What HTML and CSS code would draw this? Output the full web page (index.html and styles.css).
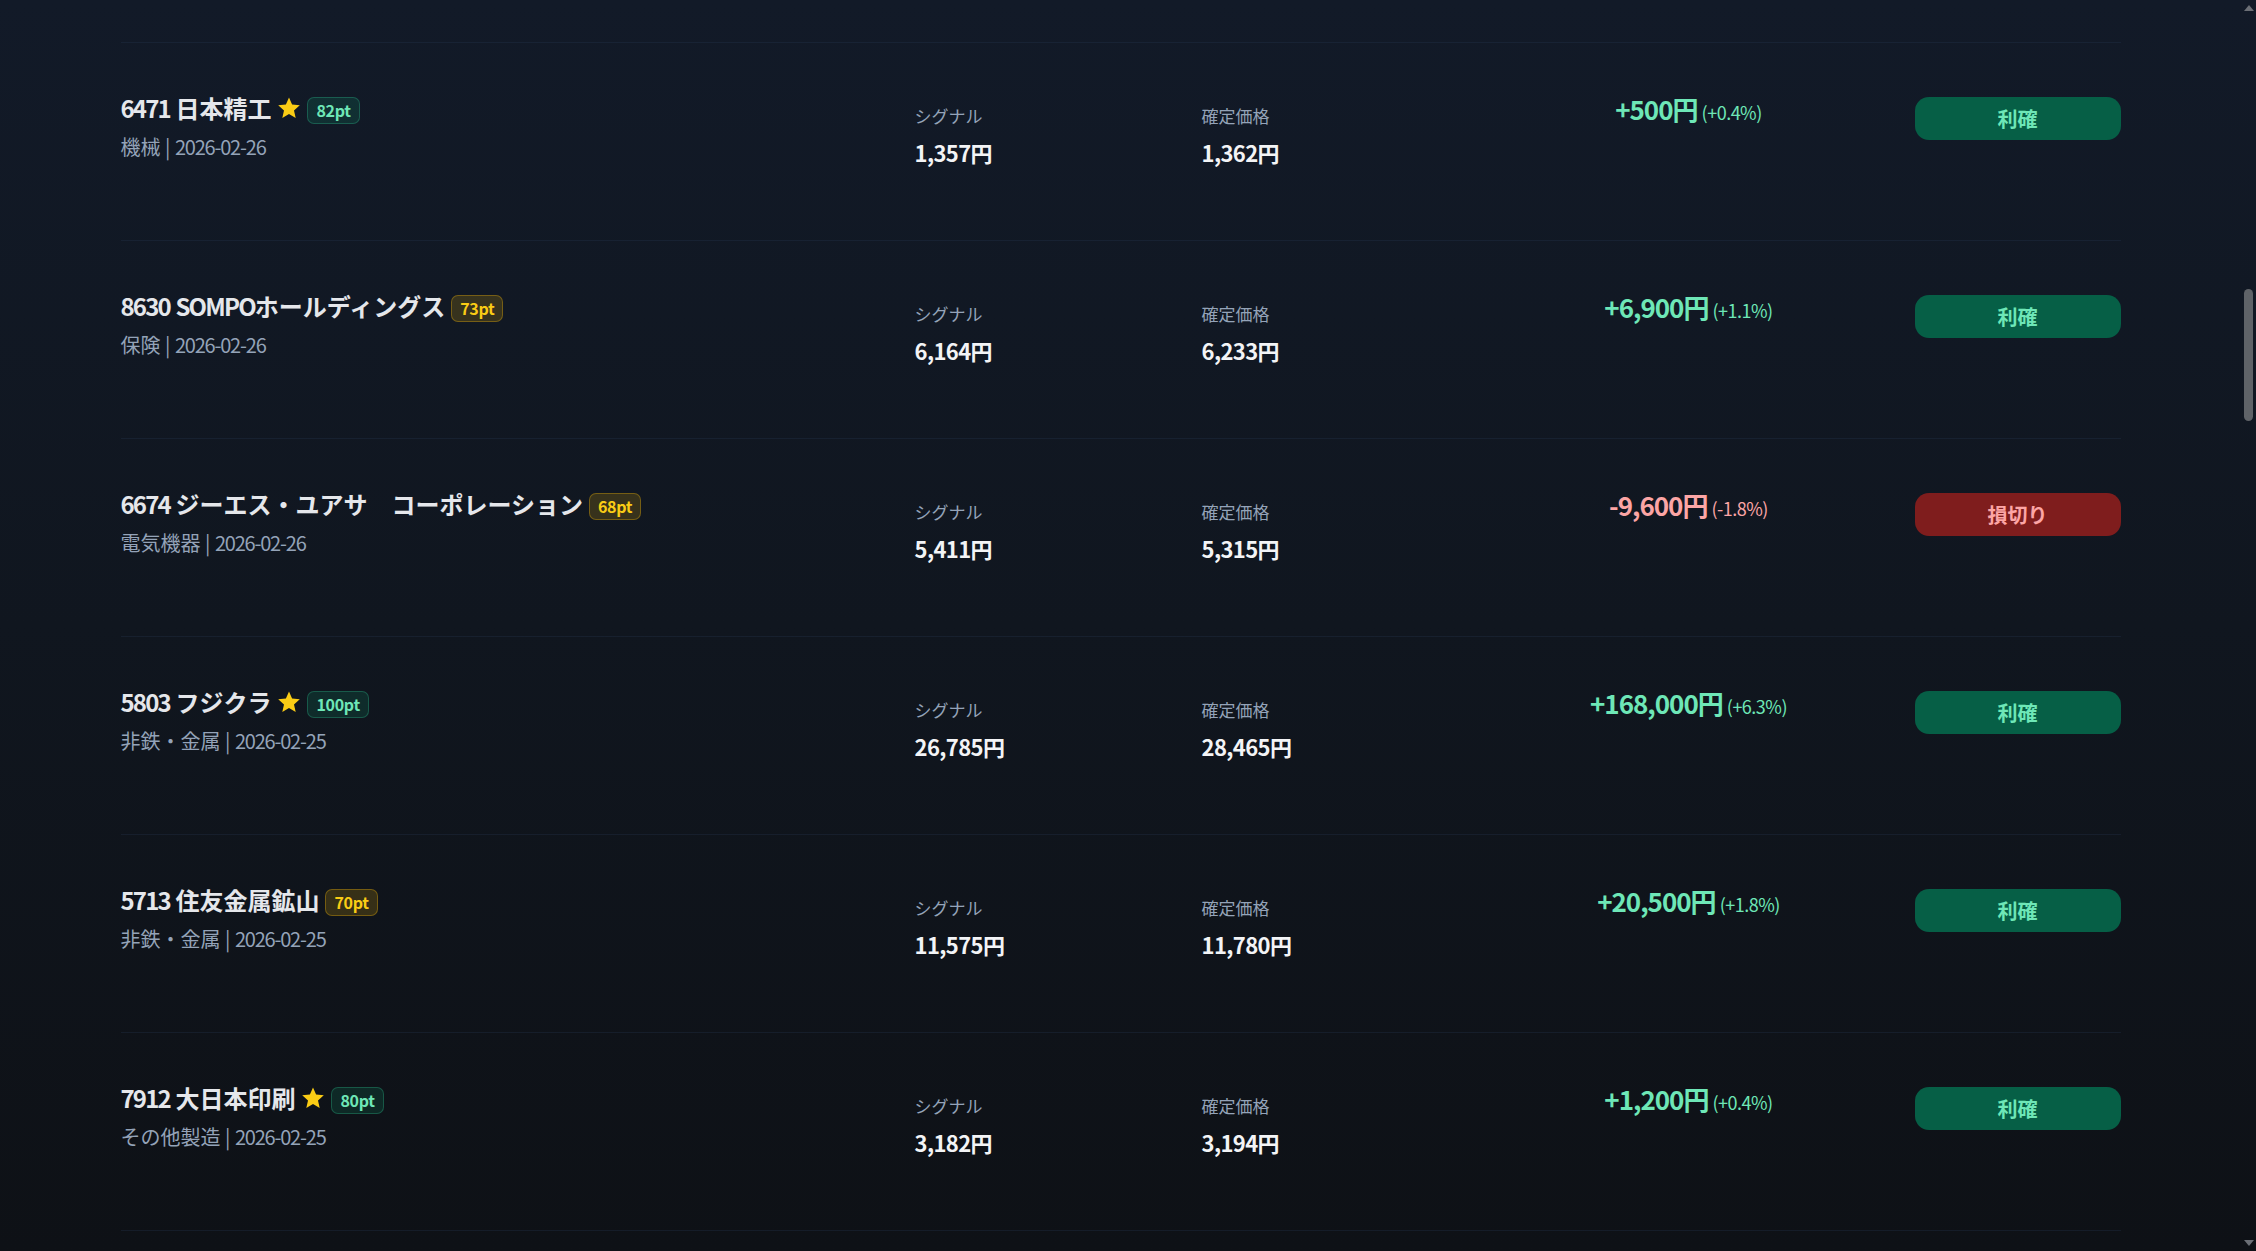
FILE: index.html
```html
<!DOCTYPE html>
<html lang="ja">
<head>
<meta charset="utf-8">
<title>シグナル履歴</title>
<link rel="stylesheet" href="styles.css">
</head>
<body>
<div class="app">
  <main class="viewport">
    <div class="list">
      <div class="row">
        <div class="stock">
          <div class="title"><span class="name"><span class="lat">6471</span> 日本精工</span><svg class="star" viewBox="0 0 24 24"><path d="M12 1.5l3.1 7.1 7.7.7-5.8 5.1 1.7 7.6L12 18l-6.7 4 1.7-7.6-5.8-5.1 7.7-.7z"/></svg><span class="badge badge-green">82pt</span></div>
          <div class="meta">機械 | <span class="date">2026-02-26</span></div>
        </div>
        <div class="price"><div class="label">シグナル</div><div class="value">1,357円</div></div>
        <div class="price"><div class="label">確定価格</div><div class="value">1,362円</div></div>
        <div class="pnl pos"><span class="amount">+500円</span><span class="pct">(+0.4%)</span></div>
        <div class="action"><span class="btn btn-win">利確</span></div>
      </div>

      <div class="row">
        <div class="stock">
          <div class="title"><span class="name"><span class="lat">8630</span> <span class="lat">SOMPO</span>ホールディングス</span><span class="badge badge-yellow">73pt</span></div>
          <div class="meta">保険 | <span class="date">2026-02-26</span></div>
        </div>
        <div class="price"><div class="label">シグナル</div><div class="value">6,164円</div></div>
        <div class="price"><div class="label">確定価格</div><div class="value">6,233円</div></div>
        <div class="pnl pos"><span class="amount">+6,900円</span><span class="pct">(+1.1%)</span></div>
        <div class="action"><span class="btn btn-win">利確</span></div>
      </div>

      <div class="row">
        <div class="stock">
          <div class="title"><span class="name"><span class="lat">6674</span> ジーエス・ユアサ　コーポレーション</span><span class="badge badge-yellow">68pt</span></div>
          <div class="meta">電気機器 | <span class="date">2026-02-26</span></div>
        </div>
        <div class="price"><div class="label">シグナル</div><div class="value">5,411円</div></div>
        <div class="price"><div class="label">確定価格</div><div class="value">5,315円</div></div>
        <div class="pnl neg"><span class="amount">-9,600円</span><span class="pct">(-1.8%)</span></div>
        <div class="action"><span class="btn btn-loss">損切り</span></div>
      </div>

      <div class="row">
        <div class="stock">
          <div class="title"><span class="name"><span class="lat">5803</span> フジクラ</span><svg class="star" viewBox="0 0 24 24"><path d="M12 1.5l3.1 7.1 7.7.7-5.8 5.1 1.7 7.6L12 18l-6.7 4 1.7-7.6-5.8-5.1 7.7-.7z"/></svg><span class="badge badge-green">100pt</span></div>
          <div class="meta">非鉄・金属 | <span class="date">2026-02-25</span></div>
        </div>
        <div class="price"><div class="label">シグナル</div><div class="value">26,785円</div></div>
        <div class="price"><div class="label">確定価格</div><div class="value">28,465円</div></div>
        <div class="pnl pos"><span class="amount">+168,000円</span><span class="pct">(+6.3%)</span></div>
        <div class="action"><span class="btn btn-win">利確</span></div>
      </div>

      <div class="row">
        <div class="stock">
          <div class="title"><span class="name"><span class="lat">5713</span> 住友金属鉱山</span><span class="badge badge-yellow">70pt</span></div>
          <div class="meta">非鉄・金属 | <span class="date">2026-02-25</span></div>
        </div>
        <div class="price"><div class="label">シグナル</div><div class="value">11,575円</div></div>
        <div class="price"><div class="label">確定価格</div><div class="value">11,780円</div></div>
        <div class="pnl pos"><span class="amount">+20,500円</span><span class="pct">(+1.8%)</span></div>
        <div class="action"><span class="btn btn-win">利確</span></div>
      </div>

      <div class="row">
        <div class="stock">
          <div class="title"><span class="name"><span class="lat">7912</span> 大日本印刷</span><svg class="star" viewBox="0 0 24 24"><path d="M12 1.5l3.1 7.1 7.7.7-5.8 5.1 1.7 7.6L12 18l-6.7 4 1.7-7.6-5.8-5.1 7.7-.7z"/></svg><span class="badge badge-green">80pt</span></div>
          <div class="meta">その他製造 | <span class="date">2026-02-25</span></div>
        </div>
        <div class="price"><div class="label">シグナル</div><div class="value">3,182円</div></div>
        <div class="price"><div class="label">確定価格</div><div class="value">3,194円</div></div>
        <div class="pnl pos"><span class="amount">+1,200円</span><span class="pct">(+0.4%)</span></div>
        <div class="action"><span class="btn btn-win">利確</span></div>
      </div>
    </div>
  </main>
  <div class="scrollbar">
    <span class="sb-up"></span>
    <span class="sb-thumb"></span>
    <span class="sb-down"></span>
  </div>
</div>
</body>
</html>
```

FILE: styles.css
```css
html, body {
  margin: 0;
  height: 100%;
}

body {
  background: linear-gradient(180deg, #121a28 0%, #10161f 50%, #0e1116 100%);
  font-family: "Noto Sans CJK JP", "Noto Sans", sans-serif;
  color: #e5e7eb;
  overflow: hidden;
}

.app {
  display: flex;
  height: 100vh;
}

.viewport {
  flex: 1;
  overflow: hidden;
}

.list {
  width: 2000px;
  margin: 42px auto 0;
}

.row {
  display: grid;
  grid-template-columns: 794px 287px 287px 400px 1fr;
  align-items: start;
  padding: 47px 0 73px;
  border-top: 1px solid rgba(40, 56, 84, 0.3);
}

.row:last-child {
  border-bottom: 1px solid rgba(40, 56, 84, 0.3);
}

.title {
  display: flex;
  align-items: center;
  height: 36px;
}

.name {
  font-size: 24px;
  line-height: 36px;
  font-weight: 700;
  color: #e5e7eb;
  white-space: nowrap;
}

.lat {
  letter-spacing: -1.8px;
}

.star {
  width: 24px;
  height: 24px;
  margin-left: 6px;
  fill: #facc15;
  flex: none;
}

.badge {
  margin-left: 6px;
  margin-top: 5px;
  height: 27px;
  box-sizing: border-box;
  padding: 0 8px;
  border-radius: 7px;
  font-size: 16px;
  font-weight: 700;
  line-height: 25px;
  letter-spacing: -0.3px;
  border: 1px solid transparent;
}

.badge-green {
  color: #6ee7b7;
  background: rgba(16, 185, 129, 0.14);
  border-color: rgba(52, 211, 153, 0.28);
}

.badge-yellow {
  color: #facc15;
  background: rgba(234, 179, 8, 0.18);
  border-color: rgba(234, 179, 8, 0.35);
}

.meta {
  margin-top: 7px;
  font-size: 20px;
  line-height: 28px;
  color: #94a3b8;
  white-space: nowrap;
}

.date {
  letter-spacing: -1.2px;
}

.price {
  padding-top: 14px;
}

.label {
  font-size: 17px;
  line-height: 24px;
  color: #94a3b8;
}

.value {
  margin-top: 9px;
  font-size: 22px;
  line-height: 30px;
  font-weight: 700;
  color: #f3f4f6;
  letter-spacing: -0.6px;
}

.pnl {
  text-align: center;
  white-space: nowrap;
  margin-top: 1px;
  line-height: 36px;
}

.amount {
  font-size: 26px;
  font-weight: 700;
  letter-spacing: -1px;
}

.pct {
  font-size: 18px;
  margin-left: 4px;
  letter-spacing: -0.5px;
}

.pos { color: #6ee7b7; }
.neg { color: #fca5a5; }

.action {
  display: flex;
  justify-content: flex-end;
  padding-top: 7px;
}

.btn {
  display: flex;
  align-items: center;
  justify-content: center;
  width: 206px;
  height: 43px;
  border-radius: 14px;
  font-size: 20px;
  font-weight: 700;
}

.btn-win {
  background: #065f46;
  color: #6ee7b7;
}

.btn-loss {
  background: #7f1d1d;
  color: #fca5a5;
}

.scrollbar {
  width: 15px;
  flex: none;
  display: flex;
  flex-direction: column;
  align-items: center;
}

.sb-up {
  margin-top: 5px;
  width: 0;
  height: 0;
  border-left: 5px solid transparent;
  border-right: 5px solid transparent;
  border-bottom: 6px solid #6b6f76;
}

.sb-thumb {
  margin-top: 278px;
  width: 9px;
  height: 132px;
  border-radius: 5px;
  background: #5f6368;
}

.sb-down {
  margin-top: auto;
  margin-bottom: 5px;
  width: 0;
  height: 0;
  border-left: 5px solid transparent;
  border-right: 5px solid transparent;
  border-top: 6px solid #6b6f76;
}
```
